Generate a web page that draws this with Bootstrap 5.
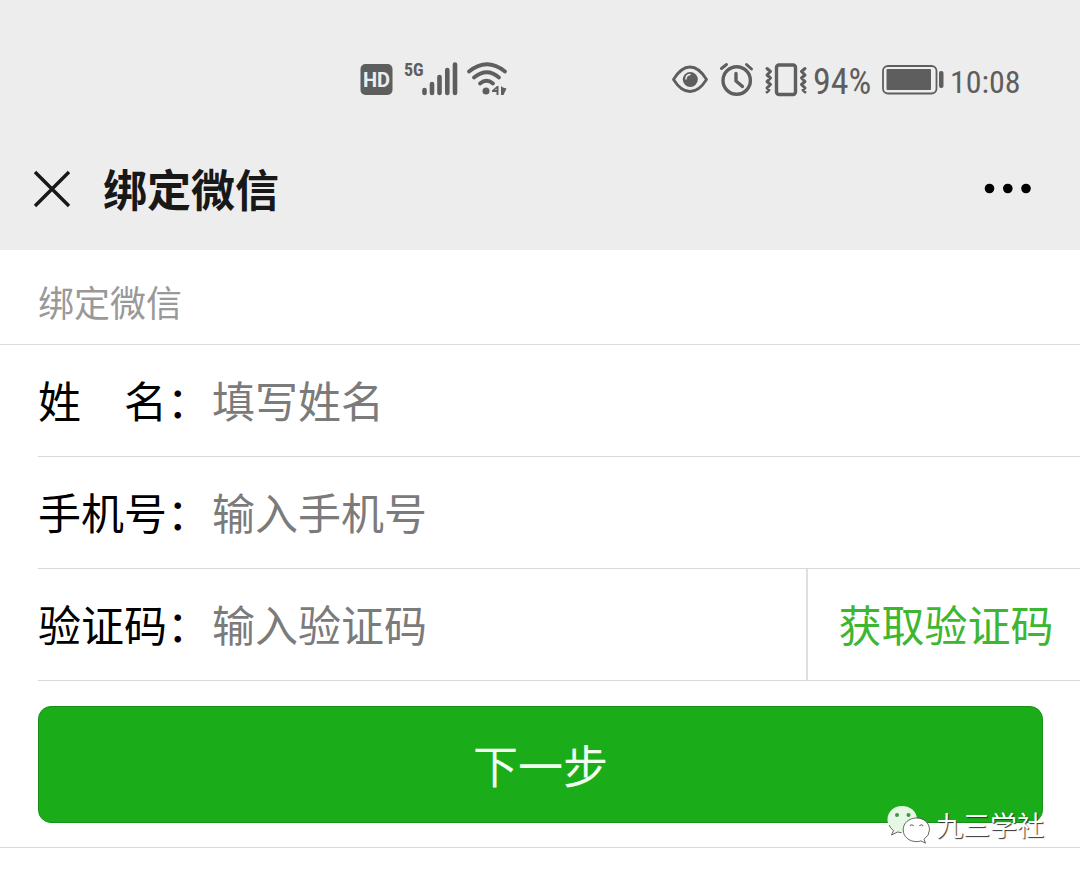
<!DOCTYPE html>
<html lang="zh-CN">
<head>
<meta charset="utf-8">
<meta name="viewport" content="width=device-width, initial-scale=1">
<title>绑定微信</title>
<link rel="stylesheet" href="https://cdn.jsdelivr.net/npm/bootstrap@5.3.0/dist/css/bootstrap.min.css">
<style>
  body { font-family: Roboto, "Noto Sans CJK SC", sans-serif; color: #000; background: #fff; }
  .top-area { background: #ededed; }
  .status-bar { height: 128px; padding: 32px 60px 0 360px; color: #5e5e5e; }
  .status-text { font-family: "Roboto Condensed", Roboto, sans-serif; font-size: 32px; line-height: 40px; padding-top: 30px; white-space: nowrap; }
  .battery-level { width: 60px; font-size: 36px; }
  .clock-time { width: 70px; text-align: right; }
  .title-bar { height: 122px; padding: 0 48px 0 33px; }
  .title-bar h1 { font-size: 44px; line-height: 60px; font-weight: 700; color: #181818; margin-left: 32px; padding-top: 6px; }
  .section-title { font-size: 36px; line-height: 48px; font-weight: 400; color: #999; padding: 31px 38px 15px; border-bottom: 1px solid #dcdcdc; }
  .form-rows { padding-left: 38px; }
  .form-line { height: 112px; border-bottom: 1px solid #d9d9d9; font-size: 43px; line-height: 60px; }
  .form-line label { width: 174px; font-weight: 400; padding-top: 4px; }
  .form-line .form-control { font-size: 43px; line-height: 60px; font-weight: 400; color: #000; border-radius: 0; min-width: 0; padding: 4px 0 0; }
  .form-line .form-control:focus { box-shadow: none; }
  .form-line .form-control::placeholder { color: #7b7b7b; opacity: 1; }
  .code-btn { width: 274px; font-size: 43px; line-height: 60px; color: #3eb62f; border: 0; border-left: 2px solid #dfdfdf; border-radius: 0; padding: 4px 0 0 4px; }
  .submit-area { padding: 25px 37px 24px 38px; border-bottom: 1px solid #d9d9d9; }
  .next-btn { height: 117px; font-size: 45px; font-weight: 400; color: #f1fff0; background: #1aad19; border: 1px solid #189016; border-radius: 13px; padding: 8px 0 0; }
  .next-btn:hover { color: #fff; background: #179b16; }
  .watermark { right: 36px; bottom: 2px; color: #fff; font-size: 27px; line-height: 36px; font-weight: 400; text-shadow: 1px 1px 1px #333; }
  .watermark span { padding-top: 4px; }
</style>
</head>
<body>
<header class="top-area">
  <div class="status-bar d-flex justify-content-between">
    <svg width="150" height="90" viewBox="360 32 150 90" fill="#5e5e5e" role="img" aria-label="HD 5G 信号 WLAN">
      <rect x="360.500" y="64" width="32" height="31" rx="5"/>
      <text x="376.500" y="87" font-family="Roboto, sans-serif" font-size="20" font-weight="700" fill="#ededed" text-anchor="middle">HD</text>
      <text x="404" y="76" font-family="'Roboto Condensed', Roboto, sans-serif" font-size="18" font-weight="700">5G</text>
      <g stroke="#5e5e5e" stroke-width="4.600" stroke-linecap="round" fill="none">
        <path d="M424.500 90v3M432 84v9M439.500 77v16M447.300 70v23M455 64.500V93"/>
        <path d="M469 71.500Q487 57 505 71.500M474 77.500Q487 67 499 77.500M480 83.500Q486.500 78 493 83.500" stroke-width="3.800"/>
      </g>
      <circle cx="486" cy="91" r="3.500"/>
      <path d="M498.500 86v9h-2v-3H492v-1.500l5-4.500zM496.500 90v-1.500l-1.500 1.500zM501 86l2 1.500 3.500 1-3 6.500H501z"/>
    </svg>
    <div class="d-flex">
      <svg width="141" height="90" viewBox="672 32 141 90" fill="none" stroke="#5e5e5e" stroke-width="3.400" stroke-linecap="round" stroke-linejoin="round" aria-hidden="true">
        <path d="M673.500 79.500Q681 67 690 67t16.500 12.500Q699 91.500 690 91.500t-16.500-12z" stroke-width="2.800"/>
        <circle cx="690.300" cy="79.500" r="7.500" fill="#5e5e5e" stroke="none"/>
        <path d="M686 79q0-4 4-4.500" stroke="#ededed" stroke-width="1.500"/>
        <circle cx="736.700" cy="80.500" r="13.700"/>
        <path d="M736 73.500v7.500l6.500 5.500"/>
        <path d="M721.500 68.500l5-4M746.500 64.500l5 4.500" stroke-width="3"/>
        <rect x="776.500" y="65" width="19" height="29.500" rx="2.500"/>
        <path d="M767 68.500l3.500 3-3.500 3.500 3.500 3-3.500 3.500 3.500 3-3.500 3.500 2 2-2 2M805 68.500l-3.500 3 3.500 3.500-3.500 3 3.500 3.500-3.500 3 3.500 3.500-2 2 2 2" stroke-width="3"/>
      </svg>
      <span class="status-text battery-level">94%</span>
      <svg width="77" height="90" viewBox="873 32 77 90" fill="#5e5e5e" aria-hidden="true">
        <rect x="883" y="66" width="53.500" height="27.500" rx="5" fill="none" stroke="#5e5e5e" stroke-width="1.800"/>
        <rect x="886.500" y="69" width="44.500" height="21" rx="1"/>
        <rect x="939" y="71" width="4.500" height="17" rx="2"/>
      </svg>
      <span class="status-text clock-time">10:08</span>
    </div>
  </div>
  <div class="title-bar d-flex align-items-center">
    <button type="button" class="btn p-0 border-0 d-flex" aria-label="关闭">
      <svg width="38" height="38" viewBox="0 0 38 38" stroke="#181818" stroke-width="3.400"><path d="M2 2l34 34M36 2L2 36"/></svg>
    </button>
    <h1 class="mb-0 flex-grow-1">绑定微信</h1>
    <button type="button" class="btn p-0 border-0 d-flex" aria-label="更多">
      <svg width="48" height="12" viewBox="0 0 48 12" fill="#000"><circle cx="5.500" cy="5.500" r="4.800"/><circle cx="23.800" cy="5.500" r="4.800"/><circle cx="42" cy="5.500" r="4.800"/></svg>
    </button>
  </div>
</header>
<main>
  <h2 class="section-title mb-0">绑定微信</h2>
  <form class="position-relative">
    <div class="form-rows">
      <div class="form-line d-flex align-items-center">
        <label for="name" class="flex-shrink-0 text-nowrap">姓　名：</label>
        <input id="name" type="text" class="form-control border-0 bg-transparent" placeholder="填写姓名">
      </div>
      <div class="form-line d-flex align-items-center">
        <label for="phone" class="flex-shrink-0 text-nowrap">手机号：</label>
        <input id="phone" type="tel" class="form-control border-0 bg-transparent" placeholder="输入手机号">
      </div>
      <div class="form-line d-flex align-items-center">
        <label for="code" class="flex-shrink-0 text-nowrap">验证码：</label>
        <input id="code" type="text" class="form-control border-0 bg-transparent" placeholder="输入验证码">
        <button type="button" class="btn code-btn flex-shrink-0 h-100 text-nowrap">获取验证码</button>
      </div>
    </div>
    <div class="submit-area">
      <button type="submit" class="btn next-btn w-100">下一步</button>
    </div>
    <div class="watermark position-absolute d-flex align-items-center">
      <svg class="me-1" width="46" height="42" viewBox="886 804 46 42" aria-hidden="true">
        <path d="M902 806c-8.500 0-14.500 6-14.500 13.500 0 5 2.500 8.500 6 11l-2 4.500 6-3q2 .8 4.500.8c8.500 0 15-5.500 15-13.300S910.500 806 902 806z" fill="#e6f8e5"/>
        <path d="M889 825q1.500 3.500 4.500 5.500l-2 4.500 6-3 4 .7" fill="none" stroke="#555" stroke-width=".9"/>
        <path d="M916.500 818c-7.500 0-13.300 5-13.300 11.800s5.800 11.800 13.300 11.800q2.500 0 4.500-.7l4.500 2.300-1.500-4q5.500-3.700 5.500-9.400c0-6.800-5.500-11.800-13-11.800z" fill="#fff" stroke="#555" stroke-width=".9"/>
        <circle cx="897" cy="815" r="2" fill="#3c9a3b"/><circle cx="908.500" cy="815" r="2" fill="#3c9a3b"/>
        <path d="M910 826q1.800-2.500 3.600 0M919.500 826q1.800-2.500 3.600 0" fill="none" stroke="#666" stroke-width="1.200"/>
      </svg>
      <span>九三学社</span>
    </div>
  </form>
</main>
<script src="https://cdn.jsdelivr.net/npm/bootstrap@5.3.0/dist/js/bootstrap.bundle.min.js"></script>
</body>
</html>
